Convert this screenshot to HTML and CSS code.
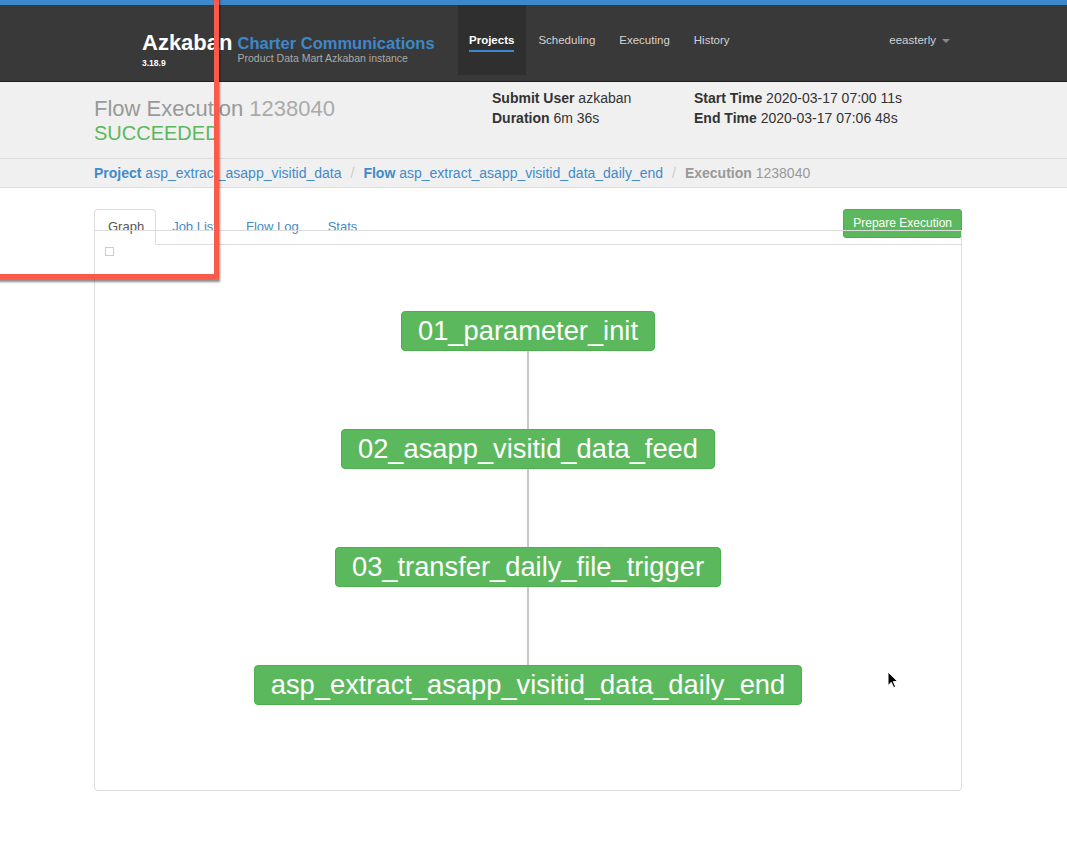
FILE: index.html
```html
<!DOCTYPE html>
<html>
<head>
<meta charset="utf-8">
<title>Flow Execution 1238040</title>
<link rel="stylesheet" href="styles.css">
</head>
<body>
<div class="topstripe"></div>
<nav class="navbar">
  <div class="brand">
    <div class="brand-main">
      <div class="brand-name">Azkaban</div>
      <div class="brand-version">3.18.9</div>
    </div>
    <div class="brand-org">
      <div class="org-name">Charter Communications</div>
      <div class="org-sub">Product Data Mart Azkaban instance</div>
    </div>
  </div>
  <ul class="nav-links">
    <li class="nav-item active"><span>Projects</span></li>
    <li class="nav-item"><span>Scheduling</span></li>
    <li class="nav-item"><span>Executing</span></li>
    <li class="nav-item"><span>History</span></li>
  </ul>
  <div class="user"><span>eeasterly</span><b class="caret"></b></div>
</nav>

<header class="flow-header">
  <div class="title-col">
    <div class="title">Flow Execution <span class="title-num">1238040</span></div>
    <div class="status">SUCCEEDED</div>
  </div>
  <div class="info-col first">
    <div class="info"><b>Submit User</b> azkaban</div>
    <div class="info"><b>Duration</b> 6m 36s</div>
  </div>
  <div class="info-col">
    <div class="info"><b>Start Time</b> 2020-03-17 07:00 11s</div>
    <div class="info"><b>End Time</b> 2020-03-17 07:06 48s</div>
  </div>
</header>

<div class="breadcrumb">
  <a class="crumb"><b>Project</b> asp_extract_asapp_visitid_data</a>
  <span class="sep">/</span>
  <a class="crumb"><b>Flow</b> asp_extract_asapp_visitid_data_daily_end</a>
  <span class="sep">/</span>
  <span class="crumb current"><b>Execution</b> 1238040</span>
</div>

<main class="content">
  <div class="tabs-row">
    <ul class="tabs">
      <li class="tab active">Graph</li>
      <li class="tab">Job List</li>
      <li class="tab">Flow Log</li>
      <li class="tab">Stats</li>
    </ul>
    <button class="btn-prepare">Prepare Execution</button>
  </div>
  <section class="graph-panel">
    <div class="check"></div>
    <div class="graph">
      <div class="node">01_parameter_init</div>
      <div class="edge"></div>
      <div class="node">02_asapp_visitid_data_feed</div>
      <div class="edge"></div>
      <div class="node">03_transfer_daily_file_trigger</div>
      <div class="edge"></div>
      <div class="node">asp_extract_asapp_visitid_data_daily_end</div>
    </div>
  </section>
</main>

<div class="annotation"></div>
<svg class="cursor" width="12" height="18" viewBox="0 0 12 18">
  <path d="M1 1 L1 14.5 L4.3 11.4 L6.6 16.6 L8.6 15.7 L6.4 10.6 L10.8 10.6 Z" fill="#000" stroke="#fff" stroke-width="1" stroke-linejoin="round"/>
</svg>
</body>
</html>
```

FILE: styles.css
```css
* { box-sizing: border-box; }
html, body { margin: 0; padding: 0; }
body {
  font-family: "Liberation Sans", Arial, sans-serif;
  color: #333;
  background: #fff;
  width: 1067px;
  height: 842px;
  overflow: hidden;
  position: relative;
}

.topstripe { height: 5px; background: #3d87cb; }

.navbar {
  height: 77px;
  background: #393939;
  border-bottom: 1px solid #1e1e1e;
  display: flex;
  align-items: flex-start;
  padding-left: 142px;
  padding-right: 117px;
}
.brand { width: 316px; display: flex; align-items: flex-start; }
.brand-main { padding-top: 27px; }
.brand-name { font-size: 22px; line-height: 22px; font-weight: bold; color: #fff; }
.brand-version { font-size: 8.5px; line-height: 10px; font-weight: bold; color: #fff; margin-top: 4px; }
.brand-org { margin-left: 5px; padding-top: 29px; }
.org-name { font-size: 16.5px; line-height: 18px; font-weight: bold; color: #3d87cb; }
.org-sub { font-size: 10.5px; line-height: 12px; color: #a9a9a9; }

.nav-links { list-style: none; margin: 0; padding: 0; display: flex; }
.nav-item {
  height: 70px;
  padding: 28px 12px 0 12px;
  font-size: 11.5px;
  line-height: 14px;
  color: #d2d2d2;
}
.nav-item.active { background: #2f2f2f; color: #fff; font-weight: bold; padding-left: 11px; }
.nav-item.active span { display: inline-block; padding-bottom: 3px; border-bottom: 2px solid #3d87cb; }

.user {
  margin-left: auto;
  padding-top: 28px;
  font-size: 11.5px;
  line-height: 14px;
  color: #d2d2d2;
  display: flex;
  align-items: center;
}
.caret {
  display: inline-block;
  width: 0; height: 0;
  margin-left: 6px;
  margin-top: 2px;
  border-left: 4px solid transparent;
  border-right: 4px solid transparent;
  border-top: 4px solid #8a8a8a;
}

.flow-header {
  height: 76px;
  background: #f0f0f0;
  display: flex;
  align-items: flex-start;
  padding-left: 94px;
}
.title-col { width: 398px; padding-top: 16px; }
.title { font-size: 22px; line-height: 22px; color: #999; }
.title-num { color: #aaa; }
.status { font-size: 20px; line-height: 22px; color: #5cb85c; margin-top: 2px; }
.info-col { padding-top: 6px; }
.info-col.first { width: 202px; }
.info { font-size: 14px; line-height: 20px; color: #333; }

.breadcrumb {
  height: 30px;
  background: #f0f0f0;
  border-top: 1px solid #dcdcdc;
  border-bottom: 1px solid #dcdcdc;
  padding-left: 94px;
  font-size: 14px;
  line-height: 28px;
  display: flex;
}
.crumb { color: #428bca; }
.crumb.current { color: #999; }
.sep { color: #ccc; padding: 0 9px; }

.content { padding: 21px 105px 0 94px; }
.tabs-row {
  display: flex;
  align-items: flex-start;
  justify-content: space-between;
  border-bottom: 1px solid #ddd;
}
.tabs { list-style: none; margin: 0; padding: 0; display: flex; }
.tab {
  margin-right: 2px;
  margin-bottom: -1px;
  padding: 8px 12px 8px 13px;
  font-size: 13px;
  line-height: 18px;
  color: #428bca;
  border: 1px solid transparent;
  border-radius: 4px 4px 0 0;
}
.tab.active { color: #555; border-color: #ddd; border-bottom-color: #fff; background: #fff; padding-right: 11px; }
.btn-prepare {
  font-family: "Liberation Sans", Arial, sans-serif;
  font-size: 12px;
  line-height: 15px;
  padding: 6px 9px;
  color: #fff;
  background: #5cb85c;
  border: 1px solid #4cae4c;
  border-radius: 3px;
}

.graph-panel {
  position: relative;
  margin-top: -15px;
  height: 561px;
  border: 1px solid #ddd;
  border-radius: 0 0 4px 4px;
  padding: 16px 0 0 10px;
}
.check { width: 9px; height: 9px; border: 1px solid #ccc; background: #fff; }
.graph {
  display: flex;
  flex-direction: column;
  align-items: center;
  margin-top: 55px;
  margin-left: -10px;
}
.node {
  height: 40px;
  padding: 0 16px;
  font-size: 27.3px;
  line-height: 38px;
  color: #fff;
  background: #5cb85c;
  border: 1px solid #4cae4c;
  border-radius: 4px;
  white-space: nowrap;
}
.edge { width: 2px; height: 78px; background: #c8c8c8; }

.annotation {
  position: absolute;
  left: -20px;
  top: -20px;
  width: 239px;
  height: 299px;
  border: 5px solid #fa5a4a;
  box-shadow: 1px 3px 2px rgba(0,0,0,0.45);
}
.cursor { position: absolute; left: 887px; top: 671px; }
```
